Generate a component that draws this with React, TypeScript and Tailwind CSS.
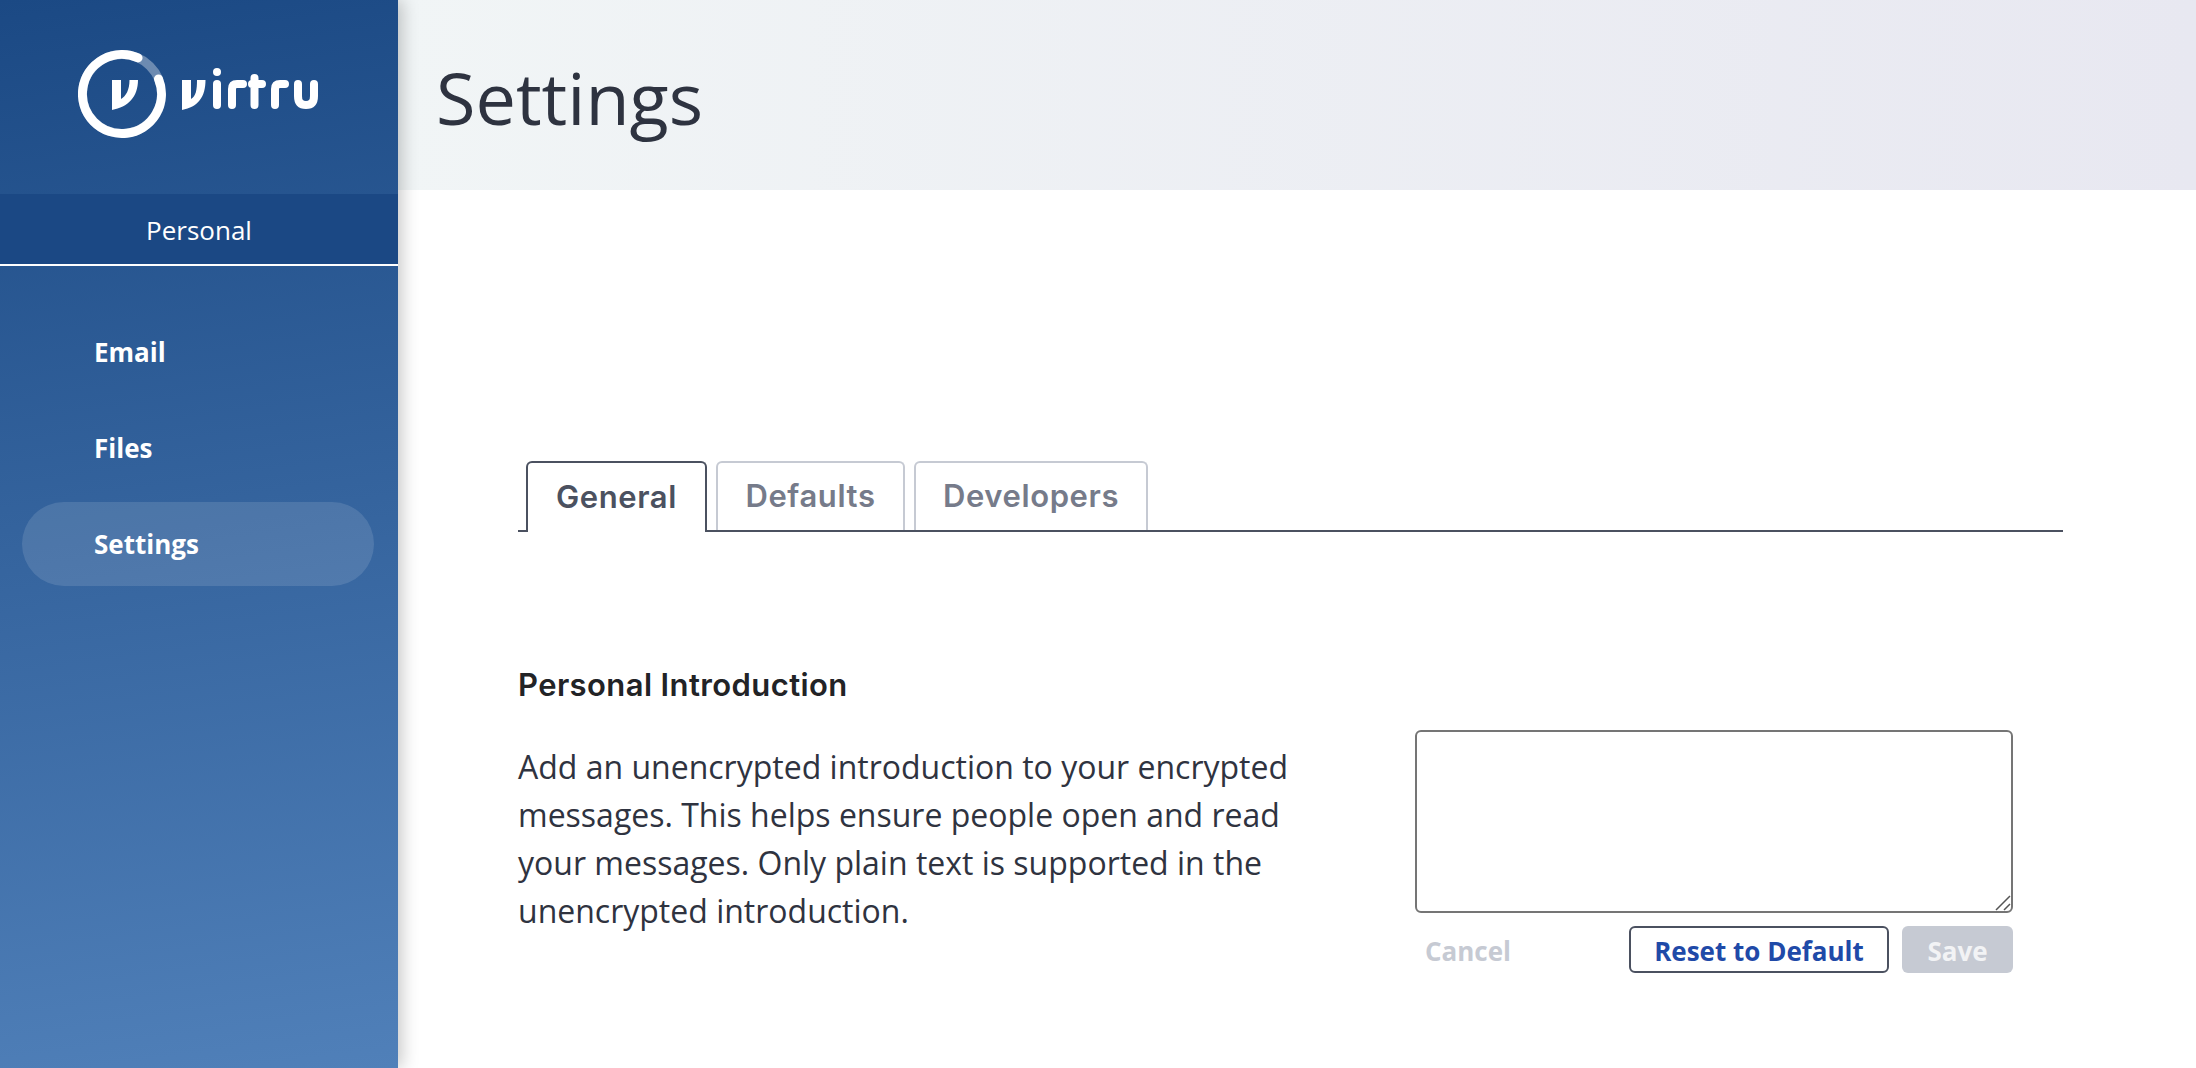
const sans = "font-['Open_Sans',sans-serif]";

const Logo = () => (
  <svg width="240" height="90" viewBox="78 50 240 90" fill="none">
    <circle cx="122" cy="94" r="39.5" stroke="#ffffff" strokeWidth="9" strokeOpacity="0.35" />
    <path d="M138 57.900 A39.5 39.5 0 1 0 158.500 79" stroke="#ffffff" strokeWidth="9" strokeLinecap="round" />
    <path d="M112 80 H121 V99 C126 96 129.500 90 129.500 80 H138 C138 97 128 107 112 110 Z" fill="#ffffff" />
    <path d="M182 80 H191 V99 C196 96 197 90 197 80 H205.500 C205.500 97 198 107 182 110 Z" fill="#ffffff" />
    <circle cx="217" cy="72" r="4" fill="#ffffff" />
    <path d="M217 84 V105" stroke="#ffffff" strokeWidth="8" strokeLinecap="round" />
    <path d="M232 105 V89 Q232 84 237 84 H243" stroke="#ffffff" strokeWidth="8" strokeLinecap="round" />
    <path d="M254.500 78 V105 M252 84 H262" stroke="#ffffff" strokeWidth="8" strokeLinecap="round" />
    <path d="M275 105 V89 Q275 84 280 84 H285" stroke="#ffffff" strokeWidth="8" strokeLinecap="round" />
    <path d="M298 84 V96 Q298 105 306 105 Q314 105 314 96 V84" stroke="#ffffff" strokeWidth="8" strokeLinecap="round" />
  </svg>
);

const navItems = [
  { label: "Email", active: false },
  { label: "Files", active: false },
  { label: "Settings", active: true },
];

const Sidebar = () => (
  <aside className={`relative z-10 flex h-[1068px] w-[398px] shrink-0 flex-col bg-[linear-gradient(172deg,#1b4984,#5080b9)] shadow-[4px_0_16px_rgba(0,0,0,0.22)] ${sans}`}>
    <div className="h-[194px] pt-[50px] pl-[78px]">
      <Logo />
    </div>
    <div className="flex h-[72px] items-center justify-center border-b-2 border-white bg-[#1b4884] pt-[2px] text-[26px] text-white">
      Personal
    </div>
    <nav className="flex flex-col gap-3 pt-[44px] pr-[24px] pl-[22px]">
      {navItems.map((item) => (
        <div
          key={item.label}
          className={`flex h-[84px] items-center rounded-[42px] pt-[1px] pl-[72px] text-[26px] font-bold text-white ${item.active ? "bg-white/12" : ""}`}
        >
          {item.label}
        </div>
      ))}
    </nav>
  </aside>
);

const tabs = [
  { label: "General", width: "w-[181px]", active: true },
  { label: "Defaults", width: "w-[189px]", active: false },
  { label: "Developers", width: "w-[234px]", active: false },
];

const Tabs = () => (
  <div className="flex h-[71px] w-[1545px] gap-[9px] border-b-2 border-[#4b5160] pl-[8px] font-['Inter',sans-serif] text-[31px] font-semibold tracking-[0.6px]">
    {tabs.map((tab) => (
      <div
        key={tab.label}
        className={`flex items-center justify-center rounded-t-[6px] border-2 border-b-0 ${tab.width} ${
          tab.active ? "-mb-[2px] h-[71px] border-[#4b5160] bg-white text-[#4b5160]" : "h-[69px] border-[#c6cad3] text-[#767b8a]"
        }`}
      >
        {tab.label}
      </div>
    ))}
  </div>
);

const ResizeHandle = () => (
  <svg className="absolute right-[2px] bottom-[2px]" width="16" height="16" viewBox="0 0 16 16" fill="none" stroke="#555555" strokeWidth="1.500">
    <path d="M1 15 L15 1 M9 15 L15 9" />
  </svg>
);

const IntroSection = () => (
  <section className="mt-[132px]">
    <h2 className="h-[40px] pt-[1px] font-['Inter',sans-serif] text-[31px] leading-[40px] font-semibold tracking-[0.4px] text-[#222326]">Personal Introduction</h2>
    <div className="mt-[26px] flex">
      <p className={`w-[897px] pt-[13px] text-[32px] leading-[48px] text-[#2f3340] ${sans}`}>
        Add an unencrypted introduction to your encrypted
        <br />
        messages. This helps ensure people open and read
        <br />
        your messages. Only plain text is supported in the
        <br />
        unencrypted introduction.
      </p>
      <div className="w-[598px]">
        <div className="relative">
          <textarea className="block h-[183px] w-full resize-none rounded-[6px] border-2 border-[#757575] bg-white" />
          <ResizeHandle />
        </div>
        <div className={`mt-[13px] flex h-[47px] items-center text-[26px] font-bold ${sans}`}>
          <span className="ml-[10px] pt-[3px] text-[#c6cad3]">Cancel</span>
          <button className="ml-auto h-full w-[260px] rounded-[6px] border-2 border-[#4b5160] bg-white pt-[3px] text-[#1f4aa8]">Reset to Default</button>
          <button className="ml-[13px] h-full w-[111px] rounded-[6px] bg-[#c6cad3] pt-[3px] text-[#f2f3f5]">Save</button>
        </div>
      </div>
    </div>
  </section>
);

export default function App() {
  return (
    <div className="flex h-[1068px] w-[2196px] overflow-hidden bg-white">
      <Sidebar />
      <main className="flex-1">
        <header className="flex h-[190px] items-center bg-linear-to-r from-[#f1f5f6] to-[#e8e8f1] pt-[4px] pl-[38px]">
          <h1 className={`text-[72px] leading-none text-[#2e3340] ${sans}`}>Settings</h1>
        </header>
        <div className="pt-[271px] pl-[120px]">
          <Tabs />
          <IntroSection />
        </div>
      </main>
    </div>
  );
}
